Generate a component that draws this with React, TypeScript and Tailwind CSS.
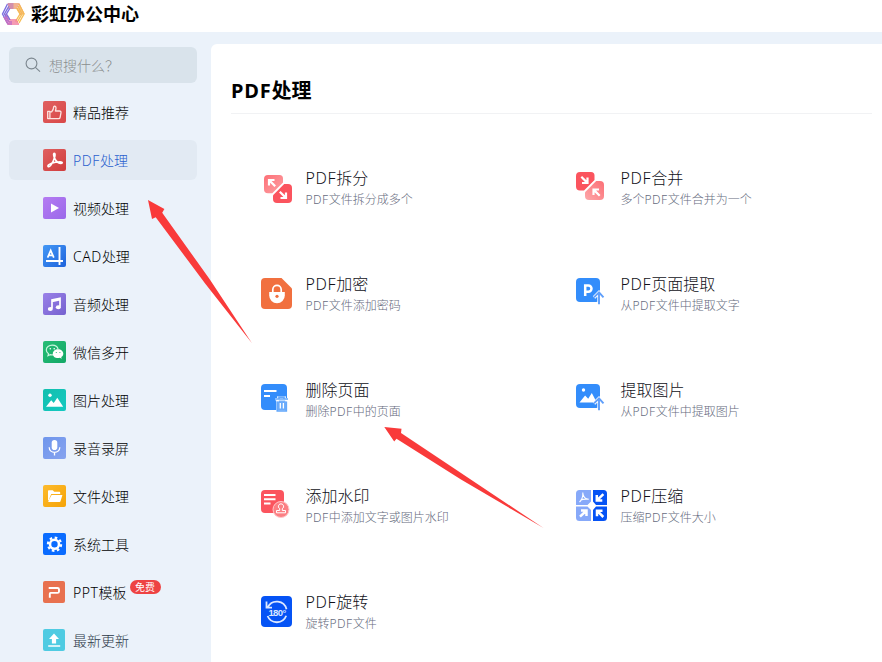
import type { ReactNode } from "react";

type MenuItem = {
  label: string;
  from: string;
  to: string;
  glyph: ReactNode;
  active?: boolean;
  muted?: boolean;
  badge?: string;
};

type Tool = {
  title: string;
  desc: string;
  icon: ReactNode;
};

const menu: MenuItem[] = [
  {
    label: "精品推荐",
    from: "#e06060",
    to: "#d94848",
    glyph: (
      <path
        d="M4.700 10.400h2.200v7.200H4.700zM6.900 10.800h1.800c1.300-1.300 1.900-3 2-5 .1-1 2.200-.8 2.300 1 .1 1.200-.3 2.200-.6 3.200h4.100c1 0 1.700.8 1.500 1.700l-.9 4.600c-.1.800-.7 1.300-1.500 1.300H6.900z"
        fill="none"
        stroke="#fde4e1"
        strokeWidth="1.300"
        strokeLinejoin="round"
      />
    ),
  },
  {
    label: "PDF处理",
    from: "#e06060",
    to: "#d03c3c",
    active: true,
    glyph: (
      <path
        d="M11.400 4.200c-1.400 0-.7 3 .1 4.900.9 2.100 2.200 3.700 3.900 4.700 1.600.9 4 .8 3.900-.3-.1-1.200-3.700-.9-6.700-.3-3 .6-7.500 2.300-7.700 3.700-.1 1.200 1.700 1 3-.8 1.700-2.300 3.100-5.500 3.900-8.400.4-1.900.4-3.500-.4-3.500z"
        fill="none"
        stroke="#fff"
        strokeWidth="1.600"
        strokeLinejoin="round"
      />
    ),
  },
  {
    label: "视频处理",
    from: "#b57cf2",
    to: "#9a68ea",
    glyph: <path d="M8 6.500l8 4.500-8 4.500z" fill="#fff" />,
  },
  {
    label: "CAD处理",
    from: "#4398f5",
    to: "#1e63dc",
    glyph: (
      <>
        <path d="M3 16h17M16.500 2v18" stroke="#fff" strokeWidth="1.900" />
        <path d="M4.600 12.600L7.700 5.400l3.100 7.200M5.700 10.400h4" fill="none" stroke="#fff" strokeWidth="1.700" />
      </>
    ),
  },
  {
    label: "音频处理",
    from: "#9a82e8",
    to: "#7561cf",
    glyph: (
      <>
        <path d="M9 15.500V7l8-1.800v8.600M9 8.400l8-1.800" fill="none" stroke="#fff" strokeWidth="1.700" />
        <ellipse cx="7.300" cy="16" rx="2.500" ry="2" fill="#fff" />
        <ellipse cx="15.300" cy="14.300" rx="2.500" ry="2" fill="#fff" />
      </>
    ),
  },
  {
    label: "微信多开",
    from: "#27bd76",
    to: "#12a866",
    glyph: (
      <>
        <path
          d="M9.300 4.100c-3.400 0-6 2.100-6 4.900 0 1.600.8 2.900 2.200 3.800L5 14.700l2.200-1.100c1 .3 2.100.4 3.100.2M15.100 8.200c-.5-2.400-2.900-4.100-5.800-4.100"
          fill="none"
          stroke="#c9f5dd"
          strokeWidth="1.200"
        />
        <circle cx="7.300" cy="7.700" r=".8" fill="#fff" />
        <circle cx="11.200" cy="7.700" r=".8" fill="#fff" />
        <path
          d="M15 8.300c-3 0-5.200 1.900-5.200 4.400s2.200 4.400 5.200 4.400c.7 0 1.300-.1 1.900-.3l1.800 1-.5-1.700c1.300-.8 2.100-2 2.100-3.400 0-2.500-2.300-4.400-5.300-4.400z"
          fill="#fff"
        />
        <circle cx="13.300" cy="11.500" r=".6" fill="#20b670" />
        <circle cx="16.900" cy="11.500" r=".6" fill="#20b670" />
      </>
    ),
  },
  {
    label: "图片处理",
    from: "#12bfae",
    to: "#14c9c1",
    glyph: (
      <>
        <circle cx="7" cy="6.300" r="1.700" fill="#fff" />
        <path d="M3 17.800l5.200-6.500 2.500 2.800 3.600-5.400 5.900 9.100z" fill="#fff" />
      </>
    ),
  },
  {
    label: "录音录屏",
    from: "#6f96ec",
    to: "#86a3ef",
    glyph: (
      <>
        <rect x="8.700" y="3" width="5.600" height="10" rx="2.800" fill="#fff" />
        <path d="M6.200 10.300c0 6.800 10.600 6.800 10.600 0M11.500 15.400V18.500" fill="none" stroke="#fff" strokeWidth="1.300" />
      </>
    ),
  },
  {
    label: "文件处理",
    from: "#fdbb2d",
    to: "#f5a306",
    glyph: (
      <>
        <path d="M5 15V6.200c0-.6.400-1 1-1h3.700l1.500 1.500h5c.6 0 1 .4 1 1v1.400H8.200L5.800 15z" fill="#fff" />
        <path d="M8.600 9.900h10.800L17.600 16c-.2.600-.5.900-1 .9H6c-.6 0-.9-.4-.7-1z" fill="#fff" />
      </>
    ),
  },
  {
    label: "系统工具",
    from: "#0a6cff",
    to: "#0a6cff",
    glyph: (
      <>
        <circle cx="11.500" cy="11.300" r="4.500" fill="none" stroke="#fff" strokeWidth="2.600" />
        <circle cx="11.500" cy="11.300" r="6.600" fill="none" stroke="#fff" strokeWidth="2.200" strokeDasharray="2.600 2.584" />
      </>
    ),
  },
  {
    label: "PPT模板",
    from: "#e8714f",
    to: "#e8714f",
    badge: "免费",
    glyph: (
      <path d="M5.700 7h8.800c1 0 1.500.6 1.500 1.500v1.900c0 .9-.5 1.500-1.500 1.500H7.600c-.5 0-.8.300-.8.800v4.100" fill="none" stroke="#fff" strokeWidth="1.900" />
    ),
  },
  {
    label: "最新更新",
    from: "#4fcbe2",
    to: "#4fcbe2",
    muted: true,
    glyph: <path d="M11 4.500l5 5.500h-2.900v4.500H8.900V10H6zM5.200 16.200h12v1.500h-12z" fill="#fff" />,
  },
];

const tools: Tool[] = [
  {
    title: "PDF拆分",
    desc: "PDF文件拆分成多个",
    icon: (
      <>
        <path d="M7 3h11.500a3.500 3.500 0 0 1 3.500 3.500v4L11.300 21.200H7A4 4 0 0 1 3 17.200V7a4 4 0 0 1 4-4z" fill="url(#pink)" />
        <path d="M23.200 12H27a4 4 0 0 1 4 4v11a4 4 0 0 1-4 4H16a4 4 0 0 1-4-4v-3.800z" fill="#fb545e" />
        <path d="M8 13.500V8h5.500M8.600 8.600l5.600 5.600M25 20.500V26h-5.500M24.400 25.400l-5.600-5.600" fill="none" stroke="#fff" strokeWidth="2.200" />
      </>
    ),
  },
  {
    title: "PDF合并",
    desc: "多个PDF文件合并为一个",
    icon: (
      <>
        <path d="M4 0h11a3.500 3.500 0 0 1 3.500 3.500V8L8 18.500H4a4 4 0 0 1-4-4V4a4 4 0 0 1 4-4z" fill="#fb545e" />
        <path d="M20.200 9H24a4 4 0 0 1 4 4v11a4 4 0 0 1-4 4H13a4 4 0 0 1-4-4v-3.800z" fill="url(#pink2)" />
        <path d="M11.500 5.500V11H6M10.900 10.400L5.300 4.800M17.500 23v-5.500H23M18.100 18.100l5.600 5.600" fill="none" stroke="#fff" strokeWidth="2.200" />
      </>
    ),
  },
  {
    title: "PDF加密",
    desc: "PDF文件添加密码",
    icon: (
      <>
        <path d="M4 0h16.500L31 10.500V27a4 4 0 0 1-4 4H4a4 4 0 0 1-4-4V4a4 4 0 0 1 4-4z" fill="#f1703f" />
        <path d="M11.800 15v-3.500a4.200 4.200 0 0 1 8.400 0V15" fill="none" stroke="#fff" strokeWidth="1.700" />
        <path d="M8.200 14h15.600v3.500a7.800 7.800 0 0 1-15.600 0z" fill="#fff" />
        <circle cx="16" cy="18.300" r="1.600" fill="#f1703f" />
      </>
    ),
  },
  {
    title: "PDF页面提取",
    desc: "从PDF文件中提取文字",
    icon: (
      <>
        <rect width="24" height="24" rx="4" fill="#338dfb" />
        <path d="M9.200 18V7.500h3.200a3.100 3.100 0 0 1 0 6.200H9.200" fill="none" stroke="#fff" strokeWidth="2.500" />
        <UpArrow />
      </>
    ),
  },
  {
    title: "删除页面",
    desc: "删除PDF中的页面",
    icon: (
      <>
        <rect width="26" height="26" rx="4" fill="#338dfb" />
        <path d="M3 7h12.500M3 12h6" stroke="#fff" strokeWidth="2.200" />
        <path d="M14.500 15.300h12M17.500 15v-1.500h6V15M16.500 16v11h9V16" fill="#75b2fc" stroke="#fff" strokeWidth="2.600" />
        <path d="M14.500 15h12.500M18 14.700v-1.500h5v1.500M16.300 17.500V27h9v-9.500" fill="none" stroke="#63a8fb" strokeWidth="1.700" />
        <path d="M16.500 17.500h8.700v9h-8.700z" fill="#6aabfb" />
        <path d="M19.300 19v5.500M22.400 19v5.500" stroke="#fff" strokeWidth="1.300" />
      </>
    ),
  },
  {
    title: "提取图片",
    desc: "从PDF文件中提取图片",
    icon: (
      <>
        <rect width="24" height="24" rx="4" fill="#338dfb" />
        <circle cx="7.500" cy="6" r="1.700" fill="#fff" />
        <path d="M3.500 18.500l5.600-7 3.100 3.200 3.600-5.700 5 9.500z" fill="#fff" />
        <UpArrow />
      </>
    ),
  },
  {
    title: "添加水印",
    desc: "PDF中添加文字或图片水印",
    icon: (
      <>
        <rect width="23" height="23" rx="4" fill="#fb545e" />
        <path d="M3 5h11.500M3 9.300h11.500M3 13.500h6.500" stroke="#fff" strokeWidth="2" />
        <circle cx="20" cy="19.500" r="8" fill="#fb7f84" stroke="#ffc9cb" strokeWidth="1" />
        <path
          d="M15.500 20.500h3.200v-1.800a2.600 2.600 0 1 1 2.600 0v1.800h3.200v2.300h-9z"
          fill="none"
          stroke="#fff"
          strokeWidth="1"
        />
      </>
    ),
  },
  {
    title: "PDF压缩",
    desc: "压缩PDF文件大小",
    icon: (
      <>
        <path d="M3.500 0H15v11.500L11.500 15H0V3.500A3.500 3.500 0 0 1 3.500 0z" fill="#87a9f9" />
        <path d="M17 0h10.500A3.500 3.500 0 0 1 31 3.500V15H20l-3-3.500z" fill="#0553f5" />
        <path d="M0 16.500h11.500L15 20v11H3.500A3.500 3.500 0 0 1 0 27.500z" fill="#87a9f9" />
        <path d="M20 16.500h11v11a3.500 3.500 0 0 1-3.500 3.500H17V20z" fill="#0553f5" />
        <path d="M6.800 2.500c0 3 .7 5.500-3.300 9.500M6.800 3c.4 4 2.500 6 6 6.300M4.500 10.200c2.300-1.200 4-1.300 7-1" fill="none" stroke="#fff" strokeWidth="1.100" />
        <path
          d="M20.800 5v5.500h5.500M21.400 9.900l6-5.800M5 20.500h5.500V26M10 21l-6 5.700M26.500 20.700H21v5.500M21.500 21.200l5.800 5.800"
          fill="none"
          stroke="#fff"
          strokeWidth="2.500"
        />
      </>
    ),
  },
  {
    title: "PDF旋转",
    desc: "旋转PDF文件",
    icon: (
      <>
        <rect width="31" height="31" rx="4" fill="#0553f5" />
        <path d="M6.800 11.200a10 10 0 0 1 18.700 2M25.200 19.800a10 10 0 0 1-18.600.2M5.500 5.500v6.200h5.500" fill="none" stroke="#dce8ff" strokeWidth="1.800" />
        <text x="16" y="19.700" fill="#dce8ff" fontSize="9.500" fontWeight="700" textAnchor="middle" fontFamily="Liberation Sans, sans-serif" letterSpacing="-.6">
          180°
        </text>
      </>
    ),
  },
];

// Latin runs are spaced slightly wider than the Chinese around them
function Label({ text }: { text: string }) {
  return text.split(/([A-Z]+)/).map((part, i) =>
    i % 2 ? (
      <span key={i} className="tracking-[0.04em]">
        {part}
      </span>
    ) : (
      part
    ),
  );
}

function UpArrow() {
  return (
    <>
      <path d="M23 27V15.500M18 19.500l5-5 4.800 5" fill="none" stroke="#fff" strokeWidth="3.400" />
      <path d="M23 26.300V15M18 19.300l5-5 4.500 5" fill="none" stroke="#5f9ffb" strokeWidth="1.900" />
    </>
  );
}

function Logo() {
  return (
    <svg className="h-6 w-6 shrink-0" viewBox="0 0 24 24" fill="none" strokeWidth="1.400">
      <g stroke="#ee9b6c">
        <path d="M7 2h11l5 10M7 4h10l4.500 8.500M7 6h9l4 7" />
      </g>
      <g stroke="#f6bd55">
        <path d="M18 2.500l5 9.500-5 9M17 4.500l4 7.500-5 8.500M15.500 6l3.500 6-4.500 7.500" />
      </g>
      <g stroke="#f27a9a">
        <path d="M18 22H7l-4-7M17 20H8l-4-8M16 18H9l-3-5" />
      </g>
      <g stroke="#7d6fe0">
        <path d="M7 22L1.500 12l5-10M8 20l-4.500-8L8 4M9 18l-3.500-6L9 6" />
      </g>
      <path d="M3 15l4 7h4M4.500 14.500L8 20h3" stroke="#c46fc4" />
      <path d="M6.500 2h6M7.500 4h5M8.500 6h4" stroke="#c884b4" />
    </svg>
  );
}

function Arrows() {
  return (
    <svg className="pointer-events-none absolute inset-0 h-full w-full" viewBox="0 0 882 662" fill="#f93a3a">
      <path d="M148 200l16.400 9-2.200 3.800L209.500 279l42.500 64.200L205.500 284l-49.800-66.700-3.700 1.600z" />
      <path d="M384.300 427l17.200 1.800-.5 4.200 61.500 41 81 54-82.500-48.500-64.500-40.800-2.300 2.800z" />
    </svg>
  );
}

function Sidebar() {
  return (
    <aside className="w-[211px] shrink-0 px-[9px] pt-[15px]">
      <div className="flex h-9 w-[188px] items-center rounded-md bg-[#d9e3eb] pl-4 text-sm text-[#8a8e8e]">
        <svg className="h-4 w-4" viewBox="0 0 16 16" fill="none" stroke="#7b868e" strokeWidth="1.100">
          <circle cx="6.500" cy="6.500" r="5.400" />
          <path d="M10.400 10.400l4.600 4.300" />
        </svg>
        <span className="ml-2 pt-0.5 font-light">想搜什么？</span>
      </div>
      <nav className="mt-[9px] flex flex-col gap-2">
        {menu.map((item, i) => (
          <div
            key={item.label}
            className={`flex h-10 w-[188px] items-center rounded-md pl-[34px] text-sm font-light whitespace-nowrap ${
              item.active ? "bg-[#e2eaf3] text-[#2a5fce]" : item.muted ? "text-[#2a3646]" : "text-black"
            }`}
          >
            <svg className="h-[22px] w-[23px] shrink-0" viewBox="0 0 23 22">
              <defs>
                <linearGradient id={`menu-${i}`} x1="0" y1="0" x2="1" y2="1">
                  <stop stopColor={item.from} />
                  <stop offset="1" stopColor={item.to} />
                </linearGradient>
              </defs>
              <rect width={i > 9 ? 22 : 23} height="22" rx="2" fill={`url(#menu-${i})`} />
              {item.glyph}
            </svg>
            <span className="ml-[7px] pt-0.5">
              <Label text={item.label} />
            </span>
            {item.badge && (
              <span className="mb-2.5 ml-[3px] flex h-3.5 w-[31px] items-center justify-center rounded-full bg-[#ee4343] text-[10px] font-normal text-white">
                {item.badge}
              </span>
            )}
          </div>
        ))}
      </nav>
    </aside>
  );
}

export default function App() {
  return (
    <div className="relative flex h-[662px] w-[882px] flex-col overflow-hidden bg-[#ebf2fa] font-['Noto_Sans','Noto_Sans_CJK_SC',sans-serif]">
      <header className="flex h-8 shrink-0 items-center bg-white pb-1 pl-px">
        <Logo />
        <h1 className="ml-1.5 text-lg leading-none font-bold text-black">彩虹办公中心</h1>
      </header>
      <div className="flex min-h-0 flex-1">
        <Sidebar />
        <main className="mt-3 flex-1 rounded-tl-md bg-white pr-[10px] pl-5">
          <h2 className="flex h-[70px] items-end border-b border-[#f1f2f4] pb-2 text-xl font-bold text-black">
            <span>
              <Label text="PDF处理" />
            </span>
          </h2>
          <div className="grid grid-cols-[315px_1fr] pt-8 pl-[30px]">
            {tools.map((tool) => (
              <div key={tool.title} className="flex h-[106px] items-start pt-[26px]">
                <svg className="h-8 w-8 shrink-0" viewBox="0 0 32 32">
                  <defs>
                    <linearGradient id="pink" x1="0" y1="0" x2="1" y2="1">
                      <stop stopColor="#fd6f77" />
                      <stop offset="1" stopColor="#fda3a5" />
                    </linearGradient>
                    <linearGradient id="pink2" x1="1" y1="0" x2="0" y2="1">
                      <stop stopColor="#fc6f76" />
                      <stop offset="1" stopColor="#fda7a9" />
                    </linearGradient>
                  </defs>
                  {tool.icon}
                </svg>
                <div className="-mt-[5px] ml-[12.500px] font-light whitespace-nowrap">
                  <div className="text-base leading-[22px] text-[#101018]">
                    <Label text={tool.title} />
                  </div>
                  <div className="pt-px text-xs leading-5 text-[#666b7e]">
                    <Label text={tool.desc} />
                  </div>
                </div>
              </div>
            ))}
          </div>
        </main>
      </div>
      <Arrows />
    </div>
  );
}
